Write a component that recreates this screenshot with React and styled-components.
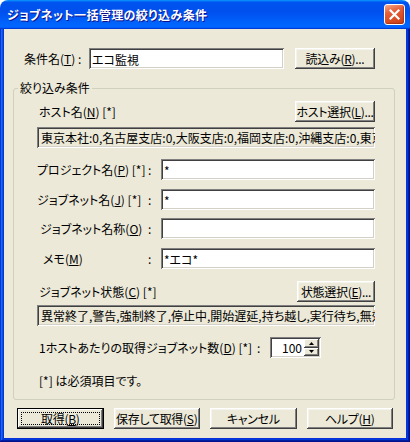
import React from 'react';
import styled, { createGlobalStyle, css } from 'styled-components';

const GlobalStyle = createGlobalStyle`
  html, body {
    margin: 0;
    padding: 0;
    background: #ffffff;
  }
  body {
    font-family: "Noto Sans CJK JP", "Liberation Sans", sans-serif;
    font-size: 12px;
    font-feature-settings: "palt";
    color: #000;
  }
`;

const Window = styled.div`
  width: 410px;
  height: 442px;
  display: flex;
  flex-direction: column;
  overflow: hidden;
`;

const TitleBar = styled.div`
  height: 29px;
  flex: none;
  box-sizing: border-box;
  padding: 0 5px 0 7px;
  display: flex;
  align-items: center;
  justify-content: space-between;
  border-radius: 8px 8px 0 0;
  background: linear-gradient(
    180deg,
    #0997ff 0%,
    #0053ee 8%,
    #0050ee 40%,
    #0066ff 88%,
    #0066ff 93%,
    #005bff 95%,
    #003dd7 96%,
    #003dd7 100%
  );
`;

const Title = styled.span`
  color: #fff;
  font-weight: 700;
  font-size: 12px;
  letter-spacing: 0.4px;
  text-shadow: 1px 1px #0f1089;
`;

const CloseButton = styled.button`
  width: 21px;
  height: 21px;
  padding: 0;
  border: 1px solid #fff;
  border-radius: 3px;
  display: flex;
  align-items: center;
  justify-content: center;
  background: linear-gradient(160deg, #f4a888 0%, #e4603a 35%, #d84c22 70%, #c8401a 100%);
  box-shadow: inset -1px -1px 1px rgba(120, 20, 0, 0.4);
`;

const Frame = styled.div`
  flex: 1;
  min-width: 0;
  display: flex;
  padding: 0 4px 4px;
  background: #0831d9;
  box-shadow: inset -1px -1px #00138c, inset 1px 0 #0831d9, inset -2px -2px #001ea0,
    inset 2px 0 #166aee, inset -3px -3px #003bda, inset 3px 0 #0855dd;
`;

const Client = styled.div`
  flex: 1;
  min-width: 0;
  background: #ece9d8;
  padding: 19px 11px 0 9px;
  display: flex;
  flex-direction: column;
`;

const TopRow = styled.div`
  height: 21px;
  display: flex;
  align-items: center;
  padding: 0 20px 0 11px;
`;

const TopLabel = styled.span`
  width: 65px;
  flex: none;
  white-space: nowrap;
`;

const sunken = css`
  box-sizing: border-box;
  height: 21px;
  border: none;
  box-shadow: inset 1px 1px #808080, inset -1px -1px #ffffff, inset 2px 2px #404040,
    inset -2px -2px #d4d0c8;
`;

const TextInput = styled.input`
  ${sunken};
  width: ${(p) => (p.$width ? `${p.$width}px` : '100%')};
  min-width: 0;
  padding: 1px 3px 0;
  font: inherit;
  font-feature-settings: "palt";
  background: #fff;
  outline: none;
`;

const ReadOnlyField = styled.div`
  ${sunken};
  min-width: 0;
  margin-top: ${(p) => p.$top}px;
  padding: 0 4px;
  line-height: 21px;
  white-space: nowrap;
  overflow: hidden;
  background: #ece9d8;
`;

const Button = styled.button`
  box-sizing: border-box;
  height: 21px;
  width: ${(p) => (p.$width ? `${p.$width}px` : 'auto')};
  flex: none;
  margin-left: ${(p) => (p.$auto ? 'auto' : '0')};
  padding: 0;
  font: inherit;
  font-feature-settings: "palt";
  letter-spacing: -0.3px;
  color: #000;
  background: #ece9d8;
  border: none;
  white-space: nowrap;
  box-shadow: inset -1px -1px #404040, inset 1px 1px #ffffff, inset -2px -2px #808080,
    inset 2px 2px #f4f3ec;
  ${(p) =>
    p.$default &&
    css`
      border: 1px solid #000;
      box-shadow: inset -1px -1px #404040, inset 1px 1px #ffffff, inset -2px -2px #808080;
      outline: 1px dotted #000;
      outline-offset: -5px;
    `}
`;

const Group = styled.fieldset`
  min-width: 0;
  margin: 12px 0 0;
  padding: 6px 19px 11px 23px;
  border: 1px solid #d0d0bf;
  border-radius: 3px;
  display: flex;
  flex-direction: column;
`;

const Legend = styled.legend`
  padding: 0 2px;
  margin-left: -19px;
  line-height: 14px;
`;

const HeaderRow = styled.div`
  height: 21px;
  margin-top: ${(p) => p.$top || 0}px;
  display: flex;
  align-items: center;
  justify-content: space-between;
  padding-left: 2px;
`;

const FormRow = styled.div`
  display: grid;
  grid-template-columns: 111px 13px minmax(0, 1fr);
  align-items: center;
  height: 21px;
  margin-top: ${(p) => p.$top}px;
`;

const RowLabel = styled.span`
  padding-left: ${(p) => p.$indent || 0}px;
  white-space: nowrap;
`;

const Colon = styled.span`
  white-space: nowrap;
`;

const CountRow = styled.div`
  display: flex;
  align-items: center;
  height: 21px;
  margin-top: 11px;
  padding-left: 2px;
`;

const CountLabel = styled.span`
  width: 218px;
  flex: none;
  white-space: nowrap;
`;

const CountColon = styled.span`
  width: 13px;
  flex: none;
`;

const Spinner = styled.div`
  ${sunken};
  width: 51px;
  display: flex;
  padding: 2px;
  background: #fff;
`;

const SpinValue = styled.span`
  flex: 1;
  text-align: right;
  padding-right: 2px;
  line-height: 17px;
`;

const SpinButtons = styled.div`
  width: 15px;
  display: flex;
  flex-direction: column;
`;

const SpinButton = styled.div`
  flex: 1;
  background: #ece9d8;
  display: flex;
  align-items: center;
  justify-content: center;
  box-shadow: inset -1px -1px #404040, inset 1px 1px #ffffff, inset -2px -2px #808080;
`;

const Note = styled.div`
  margin-top: 16px;
  padding-left: 2px;
  line-height: 14px;
`;

const ButtonBar = styled.div`
  display: grid;
  grid-template-columns: repeat(4, minmax(0, 1fr));
  gap: 10px;
  margin-top: 8px;
  padding: 0 2px 0 4px;
`;

const Arrow = ({ up }) => (
  <svg width="5" height="3" viewBox="0 0 5 3">
    <path d={up ? 'M2.5 0 L5 3 L0 3 Z' : 'M0 0 L5 0 L2.5 3 Z'} fill="#000" />
  </svg>
);

const Mn = ({ k }) => (
  <>
    (<u>{k}</u>)
  </>
);

export default function App() {
  return (
    <>
      <GlobalStyle />
      <Window>
        <TitleBar>
          <Title>ジョブネット一括管理の絞り込み条件</Title>
          <CloseButton aria-label="閉じる">
            <svg width="11" height="11" viewBox="0 0 11 11">
              <path d="M1.5 1.5 L9.5 9.5 M9.5 1.5 L1.5 9.5" stroke="#fff" strokeWidth="2.2" strokeLinecap="square" />
            </svg>
          </CloseButton>
        </TitleBar>
        <Frame>
          <Client>
            <TopRow>
              <TopLabel>
                条件名<Mn k="T" /> :
              </TopLabel>
              <TextInput $width={195} defaultValue="エコ監視" />
              <Button $width={80} $auto>
                読込み<Mn k="R" />...
              </Button>
            </TopRow>

            <Group>
              <Legend>絞り込み条件</Legend>
              <HeaderRow>
                <span>
                  ホスト名<Mn k="N" /> [*]
                </span>
                <Button $width={80}>
                  ホスト選択<Mn k="L" />...
                </Button>
              </HeaderRow>
              <ReadOnlyField $top={5}>
                東京本社:0,名古屋支店:0,大阪支店:0,福岡支店:0,沖縄支店:0,東京本社:1
              </ReadOnlyField>

              <FormRow $top={11}>
                <RowLabel>
                  プロジェクト名<Mn k="P" /> [*]
                </RowLabel>
                <Colon>:</Colon>
                <TextInput defaultValue="*" />
              </FormRow>
              <FormRow $top={9}>
                <RowLabel>
                  ジョブネット名<Mn k="J" /> [*]
                </RowLabel>
                <Colon>:</Colon>
                <TextInput defaultValue="*" />
              </FormRow>
              <FormRow $top={8}>
                <RowLabel $indent={3}>
                  ジョブネット名称<Mn k="O" />
                </RowLabel>
                <Colon>:</Colon>
                <TextInput defaultValue="" />
              </FormRow>
              <FormRow $top={9}>
                <RowLabel $indent={6}>
                  メモ<Mn k="M" />
                </RowLabel>
                <Colon>:</Colon>
                <TextInput defaultValue="*エコ*" />
              </FormRow>

              <HeaderRow $top={12}>
                <span>
                  ジョブネット状態<Mn k="C" /> [*]
                </span>
                <Button $width={78}>
                  状態選択<Mn k="E" />...
                </Button>
              </HeaderRow>
              <ReadOnlyField $top={3}>
                異常終了,警告,強制終了,停止中,開始遅延,持ち越し,実行待ち,無効,正常終了
              </ReadOnlyField>

              <CountRow>
                <CountLabel>
                  1ホストあたりの取得ジョブネット数<Mn k="D" /> [*]
                </CountLabel>
                <CountColon>:</CountColon>
                <Spinner>
                  <SpinValue>100</SpinValue>
                  <SpinButtons>
                    <SpinButton>
                      <Arrow up />
                    </SpinButton>
                    <SpinButton>
                      <Arrow />
                    </SpinButton>
                  </SpinButtons>
                </Spinner>
              </CountRow>

              <Note>[*] は必須項目です。</Note>
            </Group>

            <ButtonBar>
              <Button $default>
                取得<Mn k="B" />
              </Button>
              <Button>
                保存して取得<Mn k="S" />
              </Button>
              <Button>キャンセル</Button>
              <Button>
                ヘルプ<Mn k="H" />
              </Button>
            </ButtonBar>
          </Client>
        </Frame>
      </Window>
    </>
  );
}
